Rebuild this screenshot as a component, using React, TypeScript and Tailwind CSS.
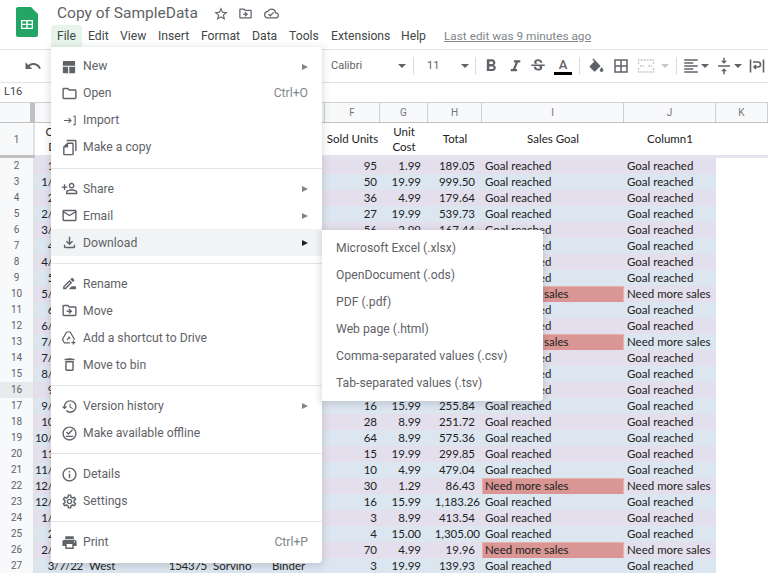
import { ReactNode } from 'react';
import {
  MdBorderAll,
  MdFormatAlignLeft,
  MdFormatBold,
  MdFormatItalic,
  MdHistory,
  MdInfoOutline,
  MdOutlineCloudDone,
  MdOutlineDelete,
  MdOutlineDriveFileMove,
  MdOutlineDriveFileRenameOutline,
  MdOutlineEmail,
  MdOutlineFileCopy,
  MdOutlineFileDownload,
  MdOutlineFolder,
  MdOutlineOfflinePin,
  MdOutlinePersonAddAlt,
  MdOutlineSettings,
  MdPrint,
  MdStarBorder,
  MdStrikethroughS,
  MdUndo,
  MdVerticalAlignCenter,
} from 'react-icons/md';

type MenuItem = {
  label: string;
  icon: ReactNode;
  shortcut?: string;
  arrow?: boolean;
  active?: boolean;
};

function NewIcon() {
  return (
    <svg width="14" height="14" viewBox="0 0 16 16" className="text-[#5f6368]">
      <path fill="currentColor" d="M2 1h12a1 1 0 0 1 1 1v12a1 1 0 0 1-1 1H2a1 1 0 0 1-1-1V2a1 1 0 0 1 1-1z" />
      <path fill="#fff" d="M1 6.5h14v1.3H8.3V15H7V7.8H1z" />
    </svg>
  );
}

function ImportIcon() {
  return (
    <svg width="15" height="15" viewBox="0 0 16 16" fill="none" stroke="#5f6368" strokeWidth="1.2">
      <path d="M2 8h7.5M7 5.4 9.6 8 7 10.6M12 3.5h2v9h-2" />
    </svg>
  );
}

function ShortcutIcon() {
  return (
    <svg width="16" height="16" viewBox="0 0 16 16" fill="none" stroke="#5f6368" strokeWidth="1.2" strokeLinejoin="round">
      <path d="M5.6 2h3.6l4.4 7.6M5.6 2 1.4 9.4l1.9 3.4H9" />
      <path d="M6.2 10.2 8 7l1.2 2" />
      <path d="M12.4 10.6v4M10.4 12.6h4" />
    </svg>
  );
}

function FillIcon() {
  return (
    <svg width="18" height="18" viewBox="0 0 18 18" fill="#5f6368">
      <path d="M6.5 1.5 5.4 2.6l1.9 1.9-4.4 4.4a1 1 0 0 0 0 1.4l4 4a1 1 0 0 0 1.4 0l5.3-5.4z" />
      <path d="M14.6 10.2s-1.7 1.9-1.7 3a1.7 1.7 0 0 0 3.4 0c0-1.1-1.7-3-1.7-3z" />
    </svg>
  );
}

function MergeIcon() {
  return (
    <svg width="18" height="18" viewBox="0 0 18 18" fill="none" stroke="#c4c7c9" strokeWidth="1.3" strokeDasharray="2 1">
      <path d="M1.5 7V3h15v4M1.5 11v4h15v-4M3 9h4M11 9h4" />
    </svg>
  );
}

function WrapIcon() {
  return (
    <svg width="18" height="18" viewBox="0 0 18 18" fill="none" stroke="#5f6368" strokeWidth="1.6">
      <path d="M2.5 2.5v13M15.5 2.5v13M5 5h5a2.5 2.5 0 0 1 0 5H6.5M8 8 6 10l2 2" />
    </svg>
  );
}

const menuGroups: MenuItem[][] = [
  [
    { label: 'New', icon: <NewIcon />, arrow: true },
    { label: 'Open', icon: <MdOutlineFolder size={17} />, shortcut: 'Ctrl+O' },
    { label: 'Import', icon: <ImportIcon /> },
    { label: 'Make a copy', icon: <MdOutlineFileCopy size={17} className="-scale-x-100" /> },
  ],
  [
    { label: 'Share', icon: <MdOutlinePersonAddAlt size={17} className="-scale-x-100" />, arrow: true },
    { label: 'Email', icon: <MdOutlineEmail size={17} />, arrow: true },
    { label: 'Download', icon: <MdOutlineFileDownload size={17} />, arrow: true, active: true },
  ],
  [
    { label: 'Rename', icon: <MdOutlineDriveFileRenameOutline size={17} /> },
    { label: 'Move', icon: <MdOutlineDriveFileMove size={17} /> },
    { label: 'Add a shortcut to Drive', icon: <ShortcutIcon /> },
    { label: 'Move to bin', icon: <MdOutlineDelete size={17} /> },
  ],
  [
    { label: 'Version history', icon: <MdHistory size={17} />, arrow: true },
    { label: 'Make available offline', icon: <MdOutlineOfflinePin size={17} /> },
  ],
  [
    { label: 'Details', icon: <MdInfoOutline size={17} /> },
    { label: 'Settings', icon: <MdOutlineSettings size={17} /> },
  ],
  [{ label: 'Print', icon: <MdPrint size={17} />, shortcut: 'Ctrl+P' }],
];

const downloadItems = [
  'Microsoft Excel (.xlsx)',
  'OpenDocument (.ods)',
  'PDF (.pdf)',
  'Web page (.html)',
  'Comma-separated values (.csv)',
  'Tab-separated values (.tsv)',
];

const menuBar = [
  { label: 'Edit', w: 'w-[32px]' },
  { label: 'View', w: 'w-[38px]' },
  { label: 'Insert', w: 'w-[43px]' },
  { label: 'Format', w: 'w-[51px]' },
  { label: 'Data', w: 'w-[37px]' },
  { label: 'Tools', w: 'w-[42px]' },
  { label: 'Extensions', w: 'w-[70px]' },
  { label: 'Help', w: 'w-[49px]' },
];

const columns = ['A', 'B', 'C', 'D', 'E', 'F', 'G', 'H', 'I', 'J', 'K'];

const headerCells = [
  { text: 'Order Date', cls: 'px-[10px]' },
  { text: 'Region', cls: '' },
  { text: 'ID', cls: '' },
  { text: 'Rep', cls: '' },
  { text: 'Item', cls: '' },
  { text: 'Sold Units', cls: 'whitespace-nowrap' },
  { text: 'Unit Cost', cls: 'px-[10px]' },
  { text: 'Total', cls: '' },
  { text: 'Sales Goal', cls: '' },
  { text: 'Column1', cls: '' },
  { text: '', cls: '' },
];

// date, sold units, unit cost, total
const rows: string[][] = [
  ['1/6/22', '95', '1.99', '189.05'],
  ['1/23/22', '50', '19.99', '999.50'],
  ['2/9/22', '36', '4.99', '179.64'],
  ['2/26/22', '27', '19.99', '539.73'],
  ['3/15/22', '56', '2.99', '167.44'],
  ['4/1/22', '', '', ''],
  ['4/18/22', '', '', ''],
  ['5/5/22', '', '', ''],
  ['5/22/22', '', '', ''],
  ['6/8/22', '', '', ''],
  ['6/25/22', '', '', ''],
  ['7/12/22', '', '', ''],
  ['7/29/22', '', '', ''],
  ['8/15/22', '', '', ''],
  ['9/1/22', '', '', ''],
  ['9/18/22', '16', '15.99', '255.84'],
  ['10/5/22', '28', '8.99', '251.72'],
  ['10/22/22', '64', '8.99', '575.36'],
  ['11/8/22', '15', '19.99', '299.85'],
  ['11/25/22', '10', '4.99', '479.04'],
  ['12/12/22', '30', '1.29', '86.43'],
  ['12/29/22', '16', '15.99', '1,183.26'],
  ['1/15/22', '3', '8.99', '413.54'],
  ['2/1/22', '4', '15.00', '1,305.00'],
  ['2/18/22', '70', '4.99', '19.96'],
  ['3/7/22', '3', '19.99', '139.93'],
];

const needMore = [10, 13, 22, 26];

const gridCols = 'grid grid-cols-[35px_51px_64px_60px_59px_56px_55px_48px_54px_142px_92px_52px]';

function Arrow({ dark }: { dark?: boolean }) {
  return (
    <span
      className={`ml-auto h-0 w-0 border-y-[3.5px] border-l-[6px] border-y-transparent ${
        dark ? 'border-l-[#202124]' : 'border-l-[#80868b]'
      }`}
    />
  );
}

function Caret({ light }: { light?: boolean }) {
  return (
    <span
      className={`h-0 w-0 border-x-[4px] border-t-[4px] border-x-transparent ${
        light ? 'border-t-[#c4c7c9]' : 'border-t-[#5f6368]'
      }`}
    />
  );
}

function Menu() {
  return (
    <div className="absolute left-[51px] top-[47px] h-[516px] w-[271px] rounded-b bg-white pt-[6px] shadow-[0_2px_6px_2px_rgba(60,64,67,0.15)]">
      {menuGroups.map((group, i) => (
        <div key={i}>
          {i > 0 && <div className="my-[6.6px] h-px bg-[#e4e5e7]" />}
          {group.map((item) => (
            <div
              key={item.label}
              className={`flex h-[27px] items-center pl-[8px] pr-[14px] text-[12.2px] text-[#5f6368] ${
                item.active ? 'bg-[#f1f3f4]' : ''
              }`}
            >
              <span className="flex w-[20px] justify-center">{item.icon}</span>
              <span className="ml-[4px]">{item.label}</span>
              {item.shortcut && <span className="ml-auto text-[#80868b]">{item.shortcut}</span>}
              {item.arrow && <Arrow dark={item.active} />}
            </div>
          ))}
        </div>
      ))}
    </div>
  );
}

function DownloadMenu() {
  return (
    <div className="absolute left-[322px] top-[230px] w-[221px] rounded-r bg-white py-[4.5px] shadow-[0_2px_6px_2px_rgba(60,64,67,0.15)]">
      {downloadItems.map((label) => (
        <div key={label} className="flex h-[27px] items-center pl-[14px] text-[12.2px] text-[#5f6368]">
          {label}
        </div>
      ))}
    </div>
  );
}

function Header() {
  return (
    <div className="flex h-[49px]">
      <div className="flex w-[57px] justify-start pl-[16px] pt-[7px]">
        <svg width="22" height="30" viewBox="0 0 22 30">
          <path fill="#23a566" d="M2 0h13l7 7v21a2 2 0 0 1-2 2H2a2 2 0 0 1-2-2V2a2 2 0 0 1 2-2z" />
          <path fill="#fff" d="M5 13h12v9H5zM6.3 14.2v2.6h4v-2.6zm5.4 0v2.6h4v-2.6zm-5.4 3.9v2.7h4v-2.7zm5.4 0v2.7h4v-2.7z" fillRule="evenodd" />
        </svg>
      </div>
      <div className="flex flex-col">
        <div className="flex h-[24px] items-center pt-[3px] text-[#5f6368]">
          <span className="w-[152px] whitespace-nowrap text-[15.5px] leading-none">Copy of SampleData</span>
          <span className="flex w-[24px] justify-center">
            <MdStarBorder size={16} />
          </span>
          <span className="flex w-[25px] justify-center">
            <MdOutlineDriveFileMove size={15} />
          </span>
          <span className="flex w-[26px] justify-center">
            <MdOutlineCloudDone size={15} />
          </span>
        </div>
        <div className="flex h-[25px] items-center text-[12.2px] text-[#444746]">
          <span className="-ml-[6px] flex h-[23px] w-[31px] items-center justify-center rounded-t bg-[#e6f4ea]">File</span>
          {menuBar.map((m) => (
            <span key={m.label} className={`${m.w} pl-[6px]`}>
              {m.label}
            </span>
          ))}
          <span className="text-[11.8px] text-[#80868b] underline">Last edit was 9 minutes ago</span>
        </div>
      </div>
    </div>
  );
}

function Toolbar() {
  const sep = <span className="h-[18px] w-px bg-[#dadce0]" />;
  return (
    <div className="flex h-[34px] items-center border-y border-[#e0e2e4] text-[#5f6368]">
      <span className="ml-[23px] flex w-[20px] justify-center">
        <MdUndo size={18} />
      </span>
      <span className="w-[280px]" />
      <span className="w-[72px] pl-[8px] text-[11px]">Calibri</span>
      <span className="flex w-[14px] justify-center">
        <Caret />
      </span>
      <span className="ml-[4px] flex">{sep}</span>
      <span className="w-[44px] pl-[13px] text-[11px]">11</span>
      <span className="flex w-[14px] justify-center">
        <Caret />
      </span>
      <span className="ml-[3px] flex">{sep}</span>
      <span className="ml-[2px] flex w-[25px] justify-center">
        <MdFormatBold size={20} />
      </span>
      <span className="flex w-[24px] justify-center">
        <MdFormatItalic size={19} />
      </span>
      <span className="flex w-[22px] justify-center">
        <MdStrikethroughS size={18} />
      </span>
      <span className="flex w-[28px] flex-col items-center leading-none">
        <span className="text-[13px] font-medium leading-[13px]">A</span>
        <span className="mt-[1px] h-[3px] w-[18px] bg-black" />
      </span>
      <span className="ml-[2px] flex">{sep}</span>
      <span className="flex w-[31px] justify-center">
        <FillIcon />
      </span>
      <span className="flex w-[20px] justify-center">
        <MdBorderAll size={18} />
      </span>
      <span className="flex w-[30px] justify-center">
        <MergeIcon />
      </span>
      <span className="flex w-[8px] justify-center">
        <Caret light />
      </span>
      <span className="ml-[7px] flex">{sep}</span>
      <span className="w-[23px] pl-[5px]">
        <MdFormatAlignLeft size={18} />
      </span>
      <span className="flex w-[10px] justify-center">
        <Caret />
      </span>
      <span className="w-[23px] pl-[5px]">
        <MdVerticalAlignCenter size={18} />
      </span>
      <span className="flex w-[10px] justify-center">
        <Caret />
      </span>
      <span className="w-[23px] pl-[5px]">
        <WrapIcon />
      </span>
    </div>
  );
}

function Sheet() {
  return (
    <div className="font-['Lato',sans-serif]">
      {/* column letters */}
      <div className={`${gridCols} h-[20px] border-b border-[#c0c0c0] bg-[#f8f9fa] font-['Roboto',sans-serif] text-[10px] text-[#777]`}>
        <div className="relative border-r border-[#c0c0c0]">
          <span className="absolute inset-y-0 right-0 w-[4px] bg-[#c0c0c0]" />
        </div>
        {columns.map((c) => (
          <div key={c} className="flex items-center justify-center border-r border-[#d0d0d0]">
            {c}
          </div>
        ))}
      </div>
      {/* header row */}
      <div className={`${gridCols} h-[32px] text-[11.5px] leading-[15px] text-[#222]`}>
        <div className="flex items-center justify-center border-r-[2px] border-[#dfe1e5] bg-[#f8f9fa] font-['Roboto',sans-serif] text-[10px] text-[#5f6368]">
          1
        </div>
        {headerCells.map((h, i) => (
          <div key={i} className={`flex items-center justify-center pb-[1px] text-center ${h.cls}`}>
            {h.text}
          </div>
        ))}
      </div>
      <div className="flex h-[3px]">
        <div className="w-[35px] bg-[#c0c0c0]" />
        <div className="flex-1 bg-[#e2e5ee]" />
      </div>
      {/* data rows */}
      {rows.map((r, i) => {
        const n = i + 2;
        const band = n % 2 === 0 ? 'bg-[#e4dfec]' : 'bg-[#dce6f1]';
        const low = needMore.includes(n);
        return (
          <div key={n} className={`${gridCols} h-[16px] text-[11.5px] leading-[16px] text-[#222]`}>
            <div
              className={`flex items-center justify-center border-b border-r-[2px] border-b-[#c0c0c0] border-r-[#dfe1e5] font-['Roboto',sans-serif] text-[10px] text-[#5f6368] ${
                n === 16 ? 'bg-[#e8eaed]' : 'bg-[#f8f9fa]'
              }`}
            >
              {n}
            </div>
            <div className={`${band} whitespace-nowrap pr-[3px] text-right tracking-[-0.3px]`}>{r[0]}</div>
            <div className={`${band} whitespace-nowrap pl-[3px]`}>{n === 27 ? 'West' : ''}</div>
            <div className={`${band} whitespace-nowrap pr-[3px] text-right tracking-[-0.3px]`}>{n === 27 ? '154375' : ''}</div>
            <div className={`${band} whitespace-nowrap pl-[3px]`}>{n === 27 ? 'Sorvino' : ''}</div>
            <div className={`${band} whitespace-nowrap pl-[3px]`}>{n === 27 ? 'Binder' : ''}</div>
            <div className={`${band} whitespace-nowrap pr-[3px] text-right`}>{r[1]}</div>
            <div className={`${band} whitespace-nowrap pr-[7px] text-right`}>{r[2]}</div>
            <div className={`${band} whitespace-nowrap text-right ${r[3].length > 6 ? 'pr-[2px]' : 'pr-[7px]'}`}>{r[3]}</div>
            <div className={`whitespace-nowrap pl-[3px] ${low ? 'bg-[#d99694] outline outline-1 -outline-offset-1 outline-[#e6b0ae]' : band}`}>
              {low ? 'Need more sales' : 'Goal reached'}
            </div>
            <div className={`${band} whitespace-nowrap pl-[3px]`}>{low ? 'Need more sales' : 'Goal reached'}</div>
            <div />
          </div>
        );
      })}
    </div>
  );
}

export default function App() {
  return (
    <div className="relative h-[573px] w-[768px] overflow-hidden bg-white font-['Roboto',sans-serif]">
      <Header />
      <Toolbar />
      <div className="flex h-[20px] items-center border-b border-[#d0d0d0] pl-[4px] text-[11px] text-[#444]">L16</div>
      <Sheet />
      <Menu />
      <DownloadMenu />
    </div>
  );
}
